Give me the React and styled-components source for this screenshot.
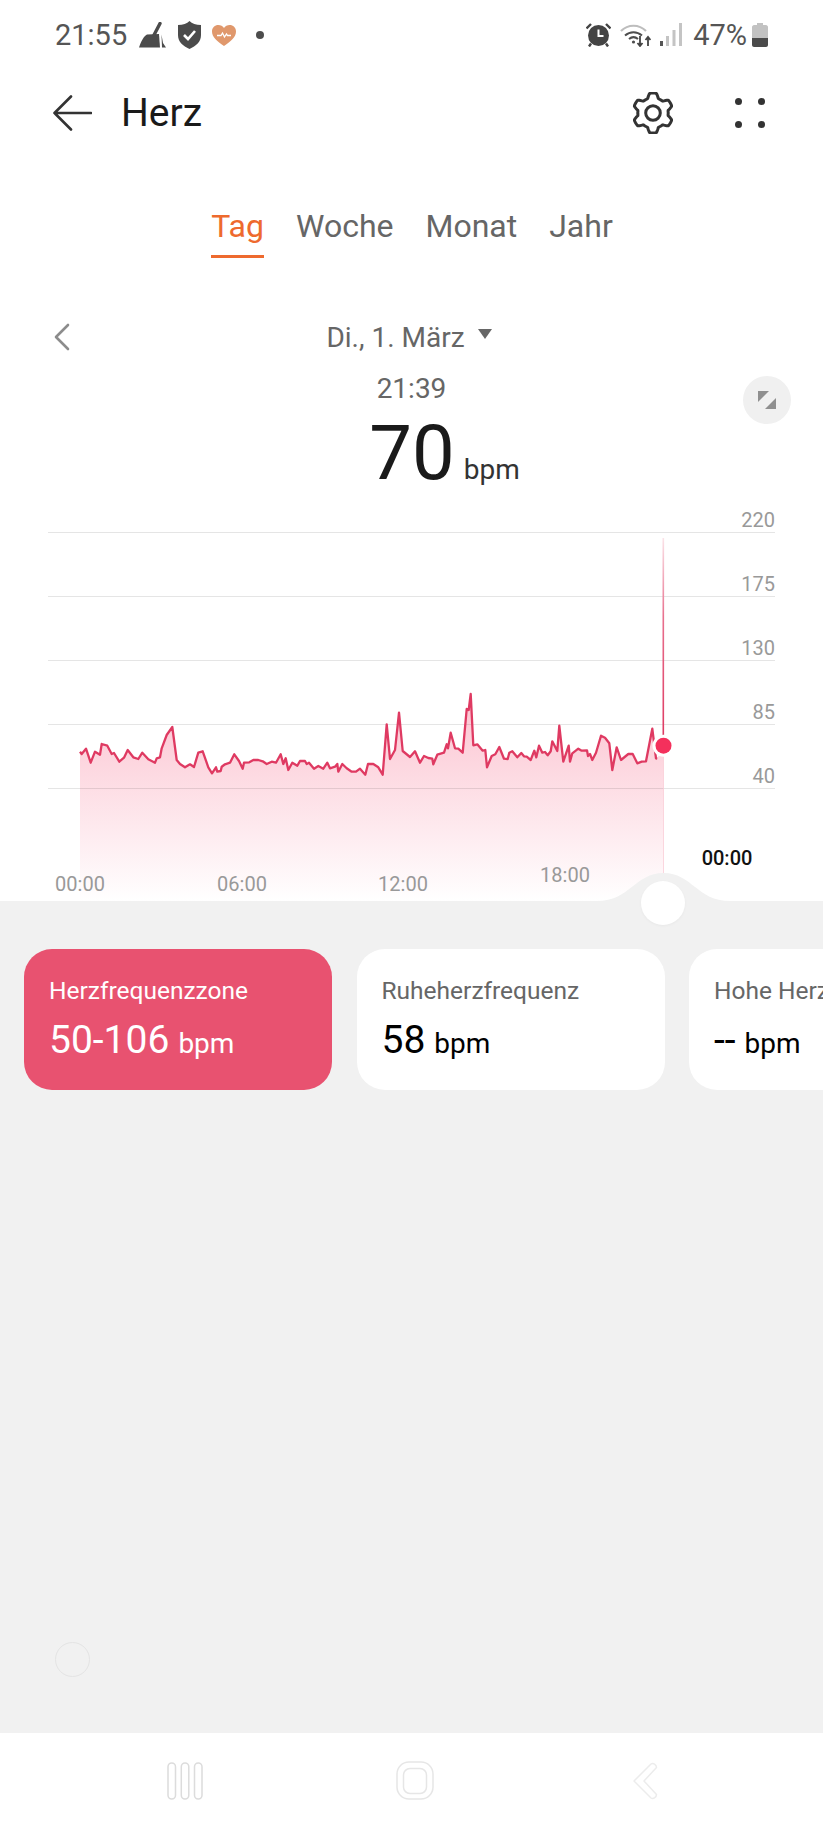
import React from 'react';
import styled, { createGlobalStyle } from 'styled-components';

const GlobalStyle = createGlobalStyle`
  html, body {
    margin: 0;
    padding: 0;
    background: #fff;
  }
  body {
    font-family: Roboto, "Liberation Sans", sans-serif;
  }
`;

const Page = styled.div`
  position: relative;
  width: 823px;
  height: 1828px;
  display: flex;
  flex-direction: column;
  overflow: hidden;
  background: #fff;
`;

const StatusBar = styled.div`
  height: 70px;
  padding: 0 55px;
  display: flex;
  align-items: center;
  justify-content: space-between;
  color: #555;
  font-size: 29px;
  line-height: 34px;
`;

const StatusGroup = styled.div`
  display: flex;
  align-items: center;
  gap: ${(p) => p.$gap}px;
`;

const StatusDot = styled.span`
  width: 8px;
  height: 8px;
  margin-left: 9px;
  border-radius: 50%;
  background: #4d4d4d;
`;

const BatteryLevel = styled.span`
  margin: 0 -4px 0 2px;
`;

const TitleBar = styled.div`
  height: 84px;
  padding: 2px 58px 0 53px;
  box-sizing: border-box;
  display: flex;
  align-items: center;
`;

const Title = styled.h1`
  flex: 1;
  margin: 0 0 0 29px;
  color: #1a1a1a;
  font-size: 39px;
  font-weight: 400;
`;

const TitleActions = styled.div`
  display: flex;
  align-items: center;
  gap: 61px;
`;

const Tabs = styled.div`
  margin-top: 50px;
  padding-left: 1px;
  display: flex;
  justify-content: center;
  gap: 32px;
`;

const Tab = styled.div`
  padding-bottom: 7px;
  border-bottom: 3px solid ${(p) => (p.$active ? '#ee6a2e' : 'transparent')};
  color: ${(p) => (p.$active ? '#ee6a2e' : '#666')};
  font-size: 32px;
  line-height: 44px;
`;

const DateRow = styled.div`
  margin-top: 59px;
  height: 40px;
  padding: 0 0 0 53px;
  display: grid;
  grid-template-columns: 17px 1fr 75px;
  align-items: center;
`;

const DateLabel = styled.div`
  display: flex;
  align-items: center;
  justify-content: center;
  gap: 13px;
  color: #666;
  font-size: 28px;
`;

const DateCaret = styled.span`
  width: 0;
  height: 0;
  margin-top: -6px;
  border-left: 7px solid transparent;
  border-right: 7px solid transparent;
  border-top: 10px solid #666;
`;

const Reading = styled.div`
  position: relative;
  margin-top: 17px;
  display: flex;
  flex-direction: column;
  align-items: center;
`;

const ReadingTime = styled.div`
  color: #666;
  font-size: 28px;
  line-height: 30px;
`;

const ReadingValue = styled.div`
  margin-top: 10px;
  padding-left: 66px;
  display: flex;
  align-items: baseline;
  gap: 9px;
  color: #1a1a1a;
  font-size: 76px;
  line-height: 78px;
`;

const ReadingUnit = styled.span`
  color: #333;
  font-size: 28px;
`;

const ExpandButton = styled.div`
  position: absolute;
  top: 2px;
  left: 743px;
  width: 48px;
  height: 48px;
  border-radius: 50%;
  display: flex;
  align-items: center;
  justify-content: center;
  background: #f0f0f0;
`;

const Chart = styled.div`
  position: relative;
  z-index: 1;
  margin-top: 1px;
  height: 391px;
`;

const ChartDrawing = styled.svg`
  display: block;
  width: 823px;
  height: 391px;
  overflow: visible;
`;

const AxisLabel = styled.span`
  position: absolute;
  left: ${(p) => p.$x}px;
  top: ${(p) => p.$y - 510}px;
  transform: translate(${(p) => (p.$right ? '-100%' : '-50%')}, -50%);
  color: ${(p) => (p.$current ? '#111' : '#999')};
  font-size: 20px;
  font-weight: ${(p) => (p.$current ? 500 : 400)};
  line-height: 24px;
`;

const Knob = styled.div`
  position: absolute;
  left: 641px;
  bottom: -24px;
  width: 44px;
  height: 44px;
  border-radius: 50%;
  background: #fff;
  box-shadow: 0 1px 3px rgba(0, 0, 0, 0.04);
`;

const Panel = styled.div`
  position: relative;
  flex: 1;
  background: #f1f1f1;
`;

const CardRow = styled.div`
  padding: 48px 0 0 24px;
  display: flex;
  gap: 24.500px;
  overflow: hidden;
`;

const Card = styled.div`
  flex: none;
  box-sizing: border-box;
  width: 308px;
  height: 141px;
  padding: 22px 0 0 25px;
  border-radius: 28px;
  background: ${(p) => (p.$active ? '#e85270' : '#fff')};
  color: ${(p) => (p.$active ? '#fff' : '#000')};
  white-space: nowrap;
`;

const CardTitle = styled.div`
  color: ${(p) => (p.$active ? '#fff' : '#666')};
  font-size: 24.500px;
  line-height: 40px;
`;

const CardValue = styled.div`
  margin-top: 4px;
  display: flex;
  align-items: baseline;
  gap: 9px;
  font-size: 39px;
  line-height: 50px;
`;

const CardUnit = styled.span`
  font-size: 28px;
`;

const FloatingCircle = styled.div`
  position: absolute;
  left: 55px;
  bottom: 56px;
  width: 33px;
  height: 33px;
  border: 1px solid #e4e4e4;
  border-radius: 50%;
`;

const NavBar = styled.div`
  height: 95px;
  padding-left: 70px;
  display: grid;
  grid-template-columns: repeat(3, 230px);
  align-items: center;
  justify-items: center;
  background: #fff;
`;

const BroomIcon = () => (
  <svg width="29" height="26" viewBox="-1 0 29 26">
    <path d="M0 25.500C2 19 5 14 8 12.500L20 12L21 25.500Z" fill="#4b4b4b" />
    <path d="M22.500 12.500L24 21L27 25.500H23Z" fill="#4b4b4b" />
    <path d="M15 13L21 1.500" stroke="#4b4b4b" strokeWidth="3.400" strokeLinecap="round" />
  </svg>
);

const ShieldIcon = () => (
  <svg width="23" height="28" viewBox="0 0 23 28">
    <path d="M11.500 0C14 2.500 18 4 23 4V14C23 21 18 25 11.500 28C5 25 0 21 0 14V4C5 4 9 2.500 11.500 0Z" fill="#4b4b4b" />
    <path d="M6 14L10 18L17 10" fill="none" stroke="#fff" strokeWidth="2.600" />
  </svg>
);

const HeartIcon = () => (
  <svg width="24" height="21" viewBox="0 0 24 21">
    <path d="M12 21C5 16 0 12 0 6.500C0 2.500 3 0 6.300 0C8.700 0 10.800 1.200 12 3C13.200 1.200 15.300 0 17.700 0C21 0 24 2.500 24 6.500C24 12 19 16 12 21Z" fill="#e0986c" />
    <path d="M5 10.500H9L10.500 8L12.500 12L14.500 9L15.500 10.500H19" fill="none" stroke="#fff" strokeWidth="1.300" />
  </svg>
);

const AlarmIcon = () => (
  <svg width="25" height="24" viewBox="0 0 25 24">
    <circle cx="12.500" cy="12.500" r="10.500" fill="#444" />
    <path d="M0.500 5.500L5 1M24.500 5.500L20 1M5 20.500L3 23.500M20 20.500L22 23.500" stroke="#444" strokeWidth="2.400" />
    <path d="M12.500 6.500V13H17.500" fill="none" stroke="#fff" strokeWidth="2" />
  </svg>
);

const WifiIcon = () => (
  <svg width="31" height="24" viewBox="0 0 31 24">
    <path d="M1 8C8 1 19 1 26 8" fill="none" stroke="#bdbdbd" strokeWidth="2.200" />
    <path d="M5 12.500C10 8 17 8 22 12.500" fill="none" stroke="#4d4d4d" strokeWidth="2" />
    <path d="M9 16C12 13.500 15 13.500 18 16" fill="none" stroke="#4d4d4d" strokeWidth="2" />
    <circle cx="13.500" cy="19" r="1.600" fill="#4d4d4d" />
    <path d="M20 13V23M17.500 20L20 23L22.500 20M28 23V14M25.500 17L28 14L30.500 17" fill="none" stroke="#444" strokeWidth="1.800" />
  </svg>
);

const SignalIcon = () => (
  <svg width="22" height="24" viewBox="0 0 22 24">
    <rect x="0" y="18" width="3" height="5" fill="#555" />
    <rect x="6" y="13" width="3" height="10" fill="#c4c4c4" />
    <rect x="12.500" y="7" width="3" height="16" fill="#c4c4c4" />
    <rect x="19" y="0" width="3" height="23" fill="#c4c4c4" />
  </svg>
);

const BatteryIcon = () => (
  <svg width="16" height="24" viewBox="0 0 16 24">
    <path d="M5 0H11V2H14C15 2 16 3 16 4V15H0V4C0 3 1 2 2 2H5Z" fill="#c2c2c2" />
    <path d="M0 15H16V22C16 23 15 24 14 24H2C1 24 0 23 0 22Z" fill="#4b4b4b" />
  </svg>
);

const BackArrow = () => (
  <svg width="39" height="36" viewBox="0 0 39 36">
    <path d="M18 1.500L1.500 18L18 34.500M1.500 18H38" fill="none" stroke="#333" strokeWidth="2.600" strokeLinecap="round" strokeLinejoin="round" />
  </svg>
);

// six flat-topped lobes, same shape as the cog in the app bar
const gearPath = () => {
  const points = [];
  for (let i = 0; i < 144; i += 1) {
    const a = (i / 144) * Math.PI * 2;
    const wave = Math.max(-1, Math.min(1, 1.8 * Math.cos(6 * a)));
    const r = 17.6 + 2.4 * wave;
    points.push(`${(21 + r * Math.sin(a)).toFixed(2)} ${(21 - r * Math.cos(a)).toFixed(2)}`);
  }
  return `M${points.join('L')}Z`;
};

const GearIcon = () => (
  <svg width="42" height="42" viewBox="0 0 42 42">
    <path d={gearPath()} fill="none" stroke="#333" strokeWidth="3" strokeLinejoin="round" />
    <circle cx="21" cy="21" r="7.300" fill="none" stroke="#333" strokeWidth="3" />
  </svg>
);

const MoreIcon = () => (
  <svg width="30" height="30" viewBox="0 0 30 30">
    <circle cx="3.500" cy="3.500" r="3.500" fill="#333" />
    <circle cx="26.500" cy="3.500" r="3.500" fill="#333" />
    <circle cx="3.500" cy="26.500" r="3.500" fill="#333" />
    <circle cx="26.500" cy="26.500" r="3.500" fill="#333" />
  </svg>
);

const PrevIcon = () => (
  <svg width="17" height="28" viewBox="0 0 17 28">
    <path d="M15 2L3 14L15 26" fill="none" stroke="#8c8c8c" strokeWidth="2.600" strokeLinecap="round" strokeLinejoin="round" />
  </svg>
);

const ExpandIcon = () => (
  <svg width="18" height="18" viewBox="0 0 18 18">
    <path d="M0 0H11L0 11Z" fill="#8f8f8f" />
    <path d="M18 7V18H7Z" fill="#8f8f8f" />
  </svg>
);

const RecentsIcon = () => (
  <svg width="36" height="38" viewBox="0 0 36 38">
    <rect x="1" y="1" width="7.500" height="36" rx="3.700" fill="none" stroke="#dcdcdc" strokeWidth="1.500" />
    <rect x="14.300" y="1" width="7.500" height="36" rx="3.700" fill="none" stroke="#dcdcdc" strokeWidth="1.500" />
    <rect x="27.500" y="1" width="7.500" height="36" rx="3.700" fill="none" stroke="#dcdcdc" strokeWidth="1.500" />
  </svg>
);

const HomeIcon = () => (
  <svg width="38" height="39" viewBox="0 0 38 39">
    <rect x="1" y="1" width="36" height="37" rx="12" fill="none" stroke="#e6e6e6" strokeWidth="1.500" />
    <rect x="7.500" y="7.500" width="23" height="25" rx="6.500" fill="none" stroke="#e6e6e6" strokeWidth="1.500" />
  </svg>
);

const NavBackIcon = () => (
  <svg width="25" height="38" viewBox="0 0 25 38">
    <path d="M1 19L18 2C20 0.500 23.500 2.500 23.500 5.500L11 19L23.500 32.500C23.500 35.500 20 37.500 18 36Z" fill="none" stroke="#ececec" strokeWidth="1.500" strokeLinejoin="round" />
  </svg>
);

// traced from the day curve, in 3x crop coordinates
const morningCurve = [
  [120, 215], [125, 222], [138, 206], [152, 248], [165, 215], [180, 224], [185, 192], [202, 197],
  [215, 222], [222, 219], [238, 245], [252, 233], [263, 210], [280, 232], [295, 237], [307, 218],
  [325, 238], [345, 248], [350, 235], [360, 232], [365, 205], [380, 165], [397, 141], [410, 240],
  [420, 252], [435, 262], [450, 253], [462, 261], [475, 218], [488, 214], [505, 262], [516, 280],
  [528, 262], [532, 275], [542, 273], [545, 260], [555, 253], [570, 248], [583, 223], [597, 243],
  [608, 266], [612, 248], [628, 247], [640, 240], [655, 240], [668, 244], [680, 252], [695, 245],
  [708, 248], [722, 223], [730, 252], [737, 235], [745, 270], [757, 248], [772, 257], [780, 243],
  [795, 243], [800, 252], [807, 248], [822, 266], [835, 258], [850, 266], [862, 248], [870, 265],
  [885, 260], [892, 252], [895, 275], [907, 252],
];

const eveningCurve = [
  [20, 265], [35, 275], [48, 275], [60, 266], [76, 284], [84, 252], [100, 252], [115, 262],
  [128, 284], [140, 133], [150, 237], [165, 210], [177, 98], [188, 213], [210, 231], [225, 214],
  [240, 248], [252, 228], [265, 234], [277, 236], [280, 253], [292, 224], [312, 218], [320, 193],
  [324, 205], [332, 158], [345, 205], [355, 206], [368, 218], [380, 87], [386, 90], [392, 42],
  [400, 196], [412, 193], [428, 212], [436, 210], [441, 262], [455, 228], [466, 223], [478, 201],
  [492, 236], [503, 237], [508, 218], [517, 214], [532, 232], [544, 219], [552, 229], [560, 230],
  [572, 240], [583, 212], [589, 232], [597, 197], [607, 218], [615, 216], [623, 226], [632, 214],
  [637, 184], [652, 213], [658, 137], [670, 245], [686, 197], [690, 245], [697, 220], [715, 206],
  [725, 212], [741, 211], [744, 228], [750, 222], [757, 240], [768, 218], [783, 167], [795, 173],
  [808, 190], [817, 270], [830, 202], [843, 240], [865, 222], [878, 222], [892, 250], [905, 245],
  [918, 244], [937, 146], [948, 235], [952, 236],
];

const curve = [
  ...morningCurve.map(([x, y]) => [40 + x / 3, 680 + y / 3]),
  ...eveningCurve.map(([x, y]) => [340 + x / 3, 680 + y / 3]),
]
  .map(([x, y]) => `${x.toFixed(1)} ${y.toFixed(1)}`)
  .join(' L');

const gridLines = [532, 596, 660, 724, 788];
const yLabels = [
  { text: '220', y: 520 },
  { text: '175', y: 584 },
  { text: '130', y: 648 },
  { text: '85', y: 712 },
  { text: '40', y: 776 },
];
const xLabels = [
  { text: '00:00', x: 80, y: 884 },
  { text: '06:00', x: 242, y: 884 },
  { text: '12:00', x: 403, y: 884 },
  { text: '18:00', x: 565, y: 875 },
];

const DayChart = () => (
  <ChartDrawing viewBox="0 510 823 391">
    <defs>
      <linearGradient id="area" x1="0" y1="700" x2="0" y2="901" gradientUnits="userSpaceOnUse">
        <stop offset="0" stopColor="#fcc4d1" />
        <stop offset="1" stopColor="#fff" />
      </linearGradient>
      <linearGradient id="cursor" x1="0" y1="538" x2="0" y2="735" gradientUnits="userSpaceOnUse">
        <stop offset="0" stopColor="#fbe3e8" />
        <stop offset="0.4" stopColor="#e8708e" />
        <stop offset="1" stopColor="#de3a62" />
      </linearGradient>
    </defs>
    <path d={`M${curve} L663.300 745 V901 H80 Z`} fill="url(#area)" />
    {gridLines.map((y) => (
      <line key={y} x1="48" x2="775" y1={y + 0.5} y2={y + 0.5} stroke="#000" strokeOpacity="0.1" />
    ))}
    <path d={`M${curve}`} fill="none" stroke="#df3a62" strokeWidth="2.300" strokeLinejoin="round" />
    <rect x="662.500" y="538" width="1.600" height="197" fill="url(#cursor)" />
    <rect x="663" y="755" width="1" height="120" fill="#f9c6d2" opacity="0.7" />
    <circle cx="663.500" cy="745.700" r="11" fill="#fff" />
    <circle cx="663.500" cy="745.700" r="8" fill="#f4305c" />
    <path d="M597 901C630 901 635 873 663.500 873C692 873 697 901 730 901Z" fill="#f1f1f1" />
  </ChartDrawing>
);

const App = () => (
  <Page>
    <GlobalStyle />
    <StatusBar>
      <StatusGroup $gap={11}>
        <span>21:55</span>
        <BroomIcon />
        <ShieldIcon />
        <HeartIcon />
        <StatusDot />
      </StatusGroup>
      <StatusGroup $gap={9}>
        <AlarmIcon />
        <WifiIcon />
        <SignalIcon />
        <BatteryLevel>47%</BatteryLevel>
        <BatteryIcon />
      </StatusGroup>
    </StatusBar>

    <TitleBar>
      <BackArrow />
      <Title>Herz</Title>
      <TitleActions>
        <GearIcon />
        <MoreIcon />
      </TitleActions>
    </TitleBar>

    <Tabs>
      <Tab $active>Tag</Tab>
      <Tab>Woche</Tab>
      <Tab>Monat</Tab>
      <Tab>Jahr</Tab>
    </Tabs>

    <DateRow>
      <PrevIcon />
      <DateLabel>
        Di., 1. März
        <DateCaret />
      </DateLabel>
    </DateRow>

    <Reading>
      <ReadingTime>21:39</ReadingTime>
      <ReadingValue>
        70
        <ReadingUnit>bpm</ReadingUnit>
      </ReadingValue>
      <ExpandButton>
        <ExpandIcon />
      </ExpandButton>
    </Reading>

    <Chart>
      <DayChart />
      {yLabels.map((l) => (
        <AxisLabel key={l.text} $x={775} $y={l.y} $right>
          {l.text}
        </AxisLabel>
      ))}
      {xLabels.map((l) => (
        <AxisLabel key={l.text} $x={l.x} $y={l.y}>
          {l.text}
        </AxisLabel>
      ))}
      <AxisLabel $x={727} $y={858} $current>
        00:00
      </AxisLabel>
      <Knob />
    </Chart>

    <Panel>
      <CardRow>
        <Card $active>
          <CardTitle $active>Herzfrequenzzone</CardTitle>
          <CardValue>
            50-106
            <CardUnit>bpm</CardUnit>
          </CardValue>
        </Card>
        <Card>
          <CardTitle>Ruheherzfrequenz</CardTitle>
          <CardValue>
            58
            <CardUnit>bpm</CardUnit>
          </CardValue>
        </Card>
        <Card>
          <CardTitle>Hohe Herzfrequenz</CardTitle>
          <CardValue>
            --
            <CardUnit>bpm</CardUnit>
          </CardValue>
        </Card>
      </CardRow>
      <FloatingCircle />
    </Panel>

    <NavBar>
      <RecentsIcon />
      <HomeIcon />
      <NavBackIcon />
    </NavBar>
  </Page>
);

export default App;
